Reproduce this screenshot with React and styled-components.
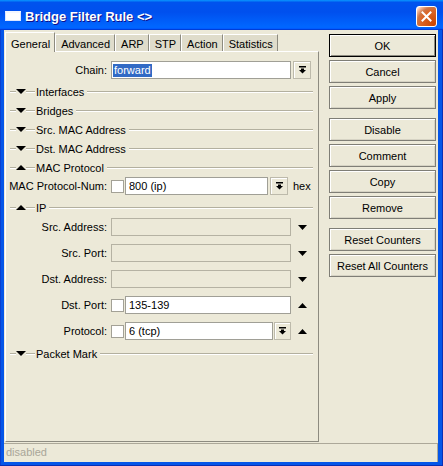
import React from "react";
import styled, { createGlobalStyle } from "styled-components";

const Global = createGlobalStyle`
  html, body { margin: 0; padding: 0; background: #ffffff; }
  body { font-family: "Liberation Sans", Arial, sans-serif; font-size: 11px; color: #000; }
  * { box-sizing: border-box; }
`;

const Window = styled.div`
  width: 443px;
  height: 466px;
  display: flex;
  flex-direction: column;
  background: #0556e8;
  box-shadow: inset -1px -1px #0a2fb5, inset 1px 1px #0a3fd0;
  overflow: hidden;
`;

const TitleBar = styled.div`
  height: 30px;
  flex: none;
  display: flex;
  align-items: center;
  padding-left: 5px;
  background: linear-gradient(180deg, #0997ff, #0053ee 8%, #0050ee 40%, #0066ff 88%, #0066ff 93%, #005bff 95%, #003dd7 96%, #003dd7);
`;

const AppIcon = styled.div`
  width: 16px;
  height: 10px;
  margin-top: 2px;
  background: #ffffff;
  border: 1px solid #dce6ff;
  border-top: 2px solid #f4f7ff;
`;

const Title = styled.div`
  flex: 1;
  margin-left: 4px;
  margin-top: 3px;
  font-family: "Liberation Sans", Arial, sans-serif;
  font-weight: bold;
  font-size: 13px;
  color: #ffffff;
  text-shadow: 1px 1px #0f1089;
  white-space: nowrap;
`;

const CloseButton = styled.div`
  width: 21px;
  height: 21px;
  margin-right: 6px;
  margin-top: 3px;
  border: 1px solid #ffffff;
  border-radius: 3px;
  display: flex;
  align-items: center;
  justify-content: center;
  background: radial-gradient(circle at 90% 90%, #cc4600 0%, #dc6527 55%, #cd7546 70%, #ffccb2 90%, #ffffff 100%);
`;

const Client = styled.div`
  flex: 1;
  margin: 0 5px 4px 4px;
  background: #ece9d8;
  display: flex;
  flex-direction: column;
  min-height: 0;
`;

const Body = styled.div`
  flex: 1;
  display: flex;
  padding-top: 2px;
  min-height: 0;
`;

const MainColumn = styled.div`
  width: 314px;
  margin-left: 1px;
  display: flex;
  flex-direction: column;
`;

const Tabs = styled.div`
  height: 19px;
  display: flex;
  align-items: flex-end;
  position: relative;
  z-index: 1;
`;

const Tab = styled.div`
  height: ${(p) => (p.$active ? 20 : 17)}px;
  margin-bottom: ${(p) => (p.$active ? -1 : 0)}px;
  padding: 2px 4px 0 5px;
  display: flex;
  align-items: center;
  background: ${(p) => (p.$active ? "#ece9d8" : "#dfdccb")};
  border-top: 1px solid #ffffff;
  border-left: 1px solid #ffffff;
  border-right: 1px solid #8d8b80;
  white-space: nowrap;
`;

const Panel = styled.div`
  flex: 1;
  border: 1px solid;
  border-color: #ffffff #8d8b80 #8d8b80 #ffffff;
  padding-top: 9px;
  display: flex;
  flex-direction: column;
`;

const FieldRow = styled.div`
  height: 18px;
  flex: none;
  display: flex;
  align-items: center;
  margin-top: ${(p) => p.$mt || 0}px;
`;

const Label = styled.div`
  width: 101px;
  margin-right: 4px;
  text-align: right;
  white-space: nowrap;
`;

const Input = styled.div`
  width: ${(p) => p.$w}px;
  height: 18px;
  flex: none;
  display: flex;
  align-items: center;
  padding-left: ${(p) => (p.$pad != null ? p.$pad : 3)}px;
  background: ${(p) => (p.$disabled ? "#ece9d8" : "#ffffff")};
  border: 1px solid ${(p) => (p.$disabled ? "#b5b2a3" : "#a09f96")};
  white-space: nowrap;
  overflow: hidden;
`;

const Selected = styled.span`
  background: #316ac5;
  color: #ffffff;
  line-height: 13px;
  padding: 0 1px;
`;

const Checkbox = styled.div`
  width: 13px;
  height: 13px;
  flex: none;
  margin-right: 1px;
  background: #ffffff;
  border: 1px solid #a3a196;
`;

const DropButton = styled.div`
  width: ${(p) => p.$w || 18}px;
  height: 18px;
  flex: none;
  margin-left: ${(p) => (p.$ml != null ? p.$ml : 2)}px;
  display: flex;
  align-items: center;
  justify-content: center;
  background: #ece9d8;
  border: 1px solid #bdbaab;
  box-shadow: inset 1px 1px #ffffff;
`;

const ArrowSlot = styled.div`
  width: 18px;
  flex: none;
  margin-left: ${(p) => (p.$ml != null ? p.$ml : 2)}px;
  display: flex;
  align-items: center;
  justify-content: center;
`;

const Unit = styled.div`
  margin-left: 5px;
`;

const SectionRow = styled.div`
  height: 19px;
  flex: none;
  display: flex;
  align-items: center;
  padding-left: 4px;
  margin-right: 5px;
  margin-top: ${(p) => p.$mt || 0}px;
`;

const Rule = styled.div`
  height: 2px;
  flex: ${(p) => (p.$w ? "none" : "1")};
  width: ${(p) => (p.$w ? `${p.$w}px` : "auto")};
  border-top: 1px solid #b3b09f;
  border-bottom: 1px solid #ffffff;
  margin-top: 1px;
`;

const SectionTitle = styled.div`
  margin: 0 3px 0 1px;
  white-space: nowrap;
`;

const ButtonColumn = styled.div`
  width: 107px;
  margin-left: 10px;
  margin-top: 2px;
  display: flex;
  flex-direction: column;
  gap: 3px;
`;

const Button = styled.div`
  height: 23px;
  flex: none;
  margin-top: ${(p) => (p.$group ? 6 : 0)}px;
  display: flex;
  align-items: center;
  justify-content: center;
  border: 1px solid ${(p) => (p.$default ? "#000000" : "#7f7e76")};
  box-shadow: inset 1px 1px #ffffff, inset -1px -1px ${(p) => (p.$default ? "#8d8b80" : "#d6d3c4")};
  background: #ece9d8;
  white-space: nowrap;
`;

const StatusBar = styled.div`
  height: 19px;
  flex: none;
  margin-top: 1px;
  padding-left: 2px;
  border-top: 1px solid #aca899;
  border-right: 1px solid #aca899;
  color: #a9a698;
  line-height: 17px;
`;

const Tri = ({ up, w = 9, h = 5 }) => (
  <svg width={w} height={h} viewBox={`0 0 ${w} ${h}`}>
    <polygon
      points={up ? `0,${h} ${w},${h} ${w / 2},0` : `0,0 ${w},0 ${w / 2},${h}`}
      fill="#000"
    />
  </svg>
);

const DropGlyph = () => (
  <svg width="7" height="8" viewBox="0 0 7 8">
    <rect x="0" y="0" width="7" height="1.5" fill="#000" />
    <rect x="2" y="2.5" width="3" height="2" fill="#000" />
    <polygon points="0,4 7,4 3.5,7.5" fill="#000" />
  </svg>
);

const Section = ({ title, open, mt }) => (
  <SectionRow $mt={mt}>
    <Rule $w={6} />
    <Tri up={open} w={10} h={5} />
    <Rule $w={9} />
    <SectionTitle>{title}</SectionTitle>
    <Rule />
  </SectionRow>
);

const tabs = ["General", "Advanced", "ARP", "STP", "Action", "Statistics"];

export default function App() {
  return (
    <>
      <Global />
      <Window>
        <TitleBar>
          <AppIcon />
          <Title>Bridge Filter Rule &lt;&gt;</Title>
          <CloseButton>
            <svg width="11" height="11" viewBox="0 0 11 11">
              <path d="M1.5 1.5 L9.5 9.5 M9.5 1.5 L1.5 9.5" stroke="#fff" strokeWidth="2" strokeLinecap="square" />
            </svg>
          </CloseButton>
        </TitleBar>
        <Client>
          <Body>
            <MainColumn>
              <Tabs>
                {tabs.map((t, i) => (
                  <Tab key={t} $active={i === 0}>{t}</Tab>
                ))}
              </Tabs>
              <Panel>
                <FieldRow>
                  <Label>Chain:</Label>
                  <Input $w={180} $pad={1}>
                    <Selected>forward</Selected>
                  </Input>
                  <DropButton><DropGlyph /></DropButton>
                </FieldRow>
                <Section title="Interfaces" mt={3} />
                <Section title="Bridges" />
                <Section title="Src. MAC Address" />
                <Section title="Dst. MAC Address" />
                <Section title="MAC Protocol" open />
                <FieldRow>
                  <Label>MAC Protocol-Num:</Label>
                  <Checkbox />
                  <Input $w={143}>800 (ip)</Input>
                  <DropButton><DropGlyph /></DropButton>
                  <Unit>hex</Unit>
                </FieldRow>
                <Section title="IP" open mt={3} />
                <FieldRow $mt={1}>
                  <Label>Src. Address:</Label>
                  <Input $w={180} $disabled />
                  <ArrowSlot><Tri /></ArrowSlot>
                </FieldRow>
                <FieldRow $mt={8}>
                  <Label>Src. Port:</Label>
                  <Input $w={180} $disabled />
                  <ArrowSlot><Tri /></ArrowSlot>
                </FieldRow>
                <FieldRow $mt={8}>
                  <Label>Dst. Address:</Label>
                  <Input $w={180} $disabled />
                  <ArrowSlot><Tri /></ArrowSlot>
                </FieldRow>
                <FieldRow $mt={8}>
                  <Label>Dst. Port:</Label>
                  <Checkbox />
                  <Input $w={166}>135-139</Input>
                  <ArrowSlot><Tri up /></ArrowSlot>
                </FieldRow>
                <FieldRow $mt={8}>
                  <Label>Protocol:</Label>
                  <Checkbox />
                  <Input $w={148}>6 (tcp)</Input>
                  <DropButton $w={17} $ml={1}><DropGlyph /></DropButton>
                  <ArrowSlot><Tri up /></ArrowSlot>
                </FieldRow>
                <Section title="Packet Mark" mt={4} />
              </Panel>
            </MainColumn>
            <ButtonColumn>
              <Button $default>OK</Button>
              <Button>Cancel</Button>
              <Button>Apply</Button>
              <Button $group>Disable</Button>
              <Button>Comment</Button>
              <Button>Copy</Button>
              <Button>Remove</Button>
              <Button $group>Reset Counters</Button>
              <Button>Reset All Counters</Button>
            </ButtonColumn>
          </Body>
          <StatusBar>disabled</StatusBar>
        </Client>
      </Window>
    </>
  );
}
